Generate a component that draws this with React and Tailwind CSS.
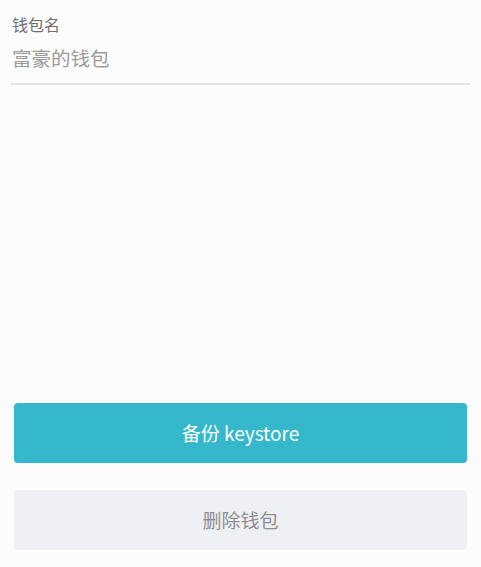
const App = () => {
  return (
    <div
      className="w-[481px] h-[567px] bg-[#fcfcfd] flex flex-col"
      style={{ fontFamily: '"Noto Sans CJK SC", "Liberation Sans", sans-serif' }}
    >
      <div className="px-[11px] pt-[13px]">
        <p className="text-[16px] leading-[22px] text-[#6e6e6e] pl-px">钱包名</p>
        <div className="mt-[10px] pb-[12px] border-b-2 border-[#e4e4e6]">
          <p className="text-[19.5px] leading-[26px] text-[#9b9b9b] pl-px">富豪的钱包</p>
        </div>
      </div>

      <div className="flex-1" />

      <div className="px-[14px] pb-[17px] flex flex-col gap-[27px]">
        <button className="h-[60px] w-full rounded-[4px] bg-[#35b8cb] text-white text-[19px]">
          备份 keystore
        </button>
        <button className="h-[60px] w-full rounded-[4px] bg-[#eff0f3] text-[#8e8e93] text-[19px]">
          删除钱包
        </button>
      </div>
    </div>
  )
}

export default App
